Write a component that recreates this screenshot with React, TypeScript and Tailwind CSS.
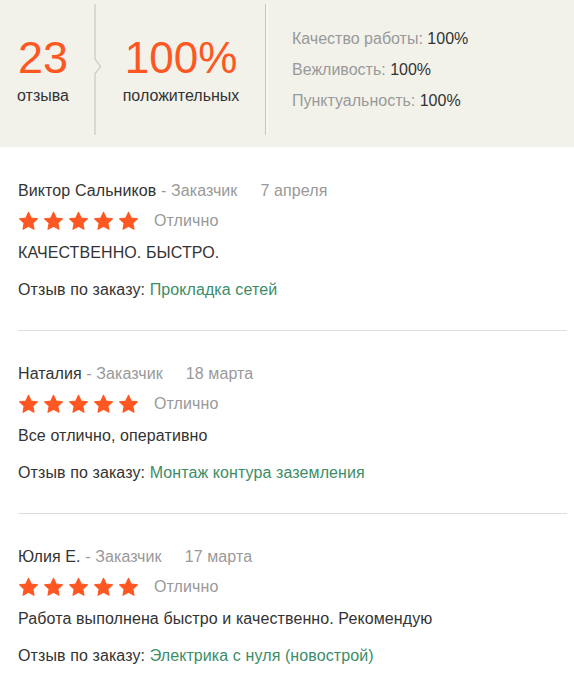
import React from "react";

type Review = {
  name: string;
  date: string;
  text: string;
  order: string;
};

const REVIEWS: Review[] = [
  { name: "Виктор Сальников", date: "7 апреля", text: "КАЧЕСТВЕННО. БЫСТРО.", order: "Прокладка сетей" },
  { name: "Наталия", date: "18 марта", text: "Все отлично, оперативно", order: "Монтаж контура заземления" },
  { name: "Юлия Е.", date: "17 марта", text: "Работа выполнена быстро и качественно. Рекомендую", order: "Электрика с нуля (новострой)" },
];

const SCORES = [
  { label: "Качество работы", value: "100%" },
  { label: "Вежливость", value: "100%" },
  { label: "Пунктуальность", value: "100%" },
];

function Star() {
  return (
    <svg width="21" height="20" viewBox="0 0 24 23" className="shrink-0">
      <path
        d="M12 1.5l3.1 6.6 7.2.9-5.3 4.9 1.4 7.1L12 17.5l-6.4 3.5 1.4-7.1-5.3-4.9 7.2-.9z"
        fill="#ff5722"
        stroke="#ff5722"
        strokeWidth="1.2"
        strokeLinejoin="round"
      />
    </svg>
  );
}

function ChevronDivider() {
  return (
    <svg width="10" height="131" viewBox="0 0 10 131" className="shrink-0">
      <path d="M1 0V55L6.5 62.5L1 70V131" fill="none" stroke="#c9c9c1" strokeWidth="1.2" />
    </svg>
  );
}

function ReviewItem({ review, first, last }: { review: Review; first: boolean; last: boolean }) {
  return (
    <div
      className={[
        first ? "pt-[34px]" : "pt-[33px]",
        last ? "pb-[20px]" : "pb-[30px] border-b border-[#dedede]",
        "tracking-[0.1px]",
      ].join(" ")}
    >
      <div className="flex items-center leading-[20px] text-[16px]">
        <span className="text-[#333]">{review.name}</span>
        <span className="text-[#999]">&nbsp;- Заказчик</span>
        <span className="ml-[23px] text-[#999]">{review.date}</span>
      </div>
      <div className="mt-[10px] flex items-center h-[20px]">
        <div className="flex gap-[4px]">
          <Star />
          <Star />
          <Star />
          <Star />
          <Star />
        </div>
        <span className="ml-[15px] text-[16px] leading-[20px] text-[#999]">Отлично</span>
      </div>
      <p className="mt-[12px] text-[16px] leading-[20px] text-[#333]">{review.text}</p>
      <p className="mt-[17px] text-[16px] leading-[20px] text-[#333]">
        Отзыв по заказу: <span className="text-[#3b8d68]">{review.order}</span>
      </p>
    </div>
  );
}

export default function App() {
  return (
    <div className="w-[574px] h-[695px] bg-white overflow-hidden" style={{ fontFamily: '"Liberation Sans", Arial, sans-serif' }}>
      <div className="h-[147px] bg-[#f2f2eb] flex items-start pt-[4px]">
        <div className="w-[94px] h-[131px] flex flex-col items-center justify-center pr-[8px]">
          <div className="text-[45px] leading-[48px] text-[#ff5722]">23</div>
          <div className="mt-[4px] text-[16px] leading-[20px] text-[#333]">отзыва</div>
        </div>
        <ChevronDivider />
        <div className="w-[161px] h-[131px] flex flex-col items-center justify-center pr-[7px]">
          <div className="text-[44px] leading-[48px] text-[#ff5722]">100%</div>
          <div className="mt-[4px] text-[16px] leading-[20px] text-[#333]">положительных</div>
        </div>
        <div className="h-[131px] w-[1px] bg-[#c9c9c1] shadow-[2px_0_0_#fafaf6]" />
        <div className="pl-[26px] pt-[25px] flex flex-col gap-[11px]">
          {SCORES.map((s) => (
            <div key={s.label} className="text-[16px] leading-[20px]">
              <span className="text-[#999]">{s.label}: </span>
              <span className="text-[#333]">{s.value}</span>
            </div>
          ))}
        </div>
      </div>
      <div className="pl-[18px] pr-[7px]">
        {REVIEWS.map((r, i) => (
          <ReviewItem key={r.name} review={r} first={i === 0} last={i === REVIEWS.length - 1} />
        ))}
      </div>
    </div>
  );
}
